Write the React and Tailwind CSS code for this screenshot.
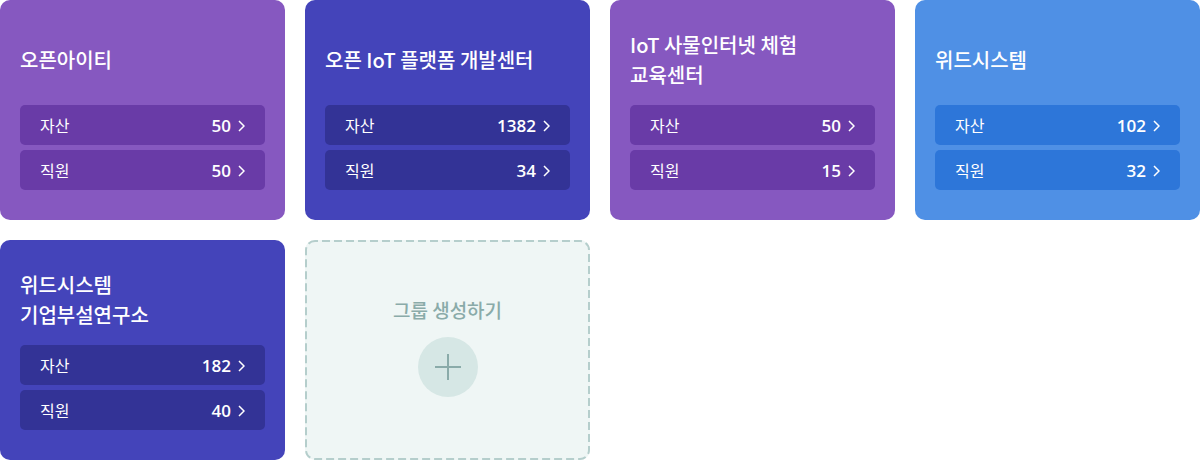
const themes = {
  purple: { card: "bg-[#8658c0]", row: "bg-[#693ba7]" },
  indigo: { card: "bg-[#4444ba]", row: "bg-[#333396]" },
  blue: { card: "bg-[#4f90e5]", row: "bg-[#2d76d9]" },
};

const groups = [
  { lines: ["오픈아이티"], assets: 50, staff: 50, theme: "purple" },
  { lines: ["오픈 IoT 플랫폼 개발센터"], assets: 1382, staff: 34, theme: "indigo" },
  { lines: ["IoT 사물인터넷 체험", "교육센터"], assets: 50, staff: 15, theme: "purple" },
  { lines: ["위드시스템"], assets: 102, staff: 32, theme: "blue" },
  { lines: ["위드시스템", "기업부설연구소"], assets: 182, staff: 40, theme: "indigo" },
];

function StatRow({ label, value, className }) {
  return (
    <a href="#" className={`flex h-10 items-center rounded-[5px] px-5 pt-0.5 text-base ${className}`}>
      <span className="grow">{label}</span>
      <span className="text-[17px] font-semibold">{value}</span>
      <svg className="ml-[7px] h-3 w-[7px]" viewBox="0 0 7 12" fill="none" stroke="currentColor" strokeWidth="1.5" aria-hidden="true">
        <path d="M1 1l5 5-5 5" />
      </svg>
    </a>
  );
}

function GroupCard({ group }) {
  const theme = themes[group.theme];
  return (
    <article className={`flex min-h-[220px] flex-col rounded-[10px] px-5 py-[30px] text-white ${theme.card}`}>
      <h2 className="mb-[15px] flex h-[60px] flex-col justify-center font-['Noto_Sans_CJK_KR',sans-serif] text-xl leading-[30px] font-medium">
        {group.lines.map((line) => (
          <span key={line}>{line}</span>
        ))}
      </h2>
      <div className="flex flex-col gap-[5px]">
        <StatRow label="자산" value={group.assets} className={theme.row} />
        <StatRow label="직원" value={group.staff} className={theme.row} />
      </div>
    </article>
  );
}

export default function App() {
  return (
    <main className="grid grid-cols-4 gap-5 font-['Open_Sans','Noto_Sans_CJK_KR',sans-serif]">
      {groups.map((group) => (
        <GroupCard key={group.lines.join(" ")} group={group} />
      ))}
      <button type="button" className="relative flex min-h-[220px] flex-col items-center justify-center gap-3 rounded-[10px] bg-[#eff6f5] pb-2 text-[#8aaba9]">
        <svg className="absolute inset-0 size-full" fill="none" aria-hidden="true">
          <rect x="1" y="1" width="283" height="218" rx="9" stroke="#b5cecc" strokeWidth="2" strokeDasharray="8 4" strokeDashoffset="5" />
        </svg>
        <span className="font-['Noto_Sans_CJK_KR',sans-serif] text-[19px] leading-[30px] font-medium">그룹 생성하기</span>
        <span className="flex size-[60px] items-center justify-center rounded-full bg-[#d6e7e5]">
          <svg className="size-[26px]" viewBox="0 0 26 26" fill="none" stroke="currentColor" strokeWidth="2" aria-hidden="true">
            <path d="M13 0v26M0 13h26" />
          </svg>
        </span>
      </button>
    </main>
  );
}
